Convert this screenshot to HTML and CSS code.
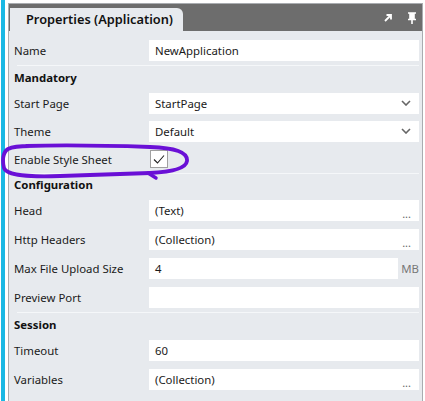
FILE: index.html
```html
<!DOCTYPE html>
<html>
<head>
<meta charset="utf-8">
<link rel="stylesheet" href="styles.css">
</head>
<body>
<div class="page">
  <div class="stripe"></div>
  <div class="window">
    <div class="titlebar">
      <div class="tab">Properties (Application)</div>
      <div class="tools">
        <svg class="ico" width="10" height="10" viewBox="0 0 10 10"><path d="M2 8 L7.5 2.5 M3.5 2 H8 V6.5" stroke="#fff" stroke-width="1.8" fill="none"/></svg>
        <svg class="ico" width="10" height="12" viewBox="0 0 10 12"><path d="M1 1 H9 M3 1 V7 M7 1 V7 M1 7.5 H9 M5 7.5 V12" stroke="#fff" stroke-width="1.6" fill="none"/><rect x="3" y="1" width="4" height="6" fill="#fff"/></svg>
      </div>
    </div>
    <div class="body">
      <div class="row first">
        <span class="label">Name</span>
        <div class="box"><span>NewApplication</span></div>
      </div>
      <div class="sep"></div>

      <div class="section compact">
        <div class="head">Mandatory</div>
        <div class="row">
          <span class="label">Start Page</span>
          <div class="box"><span>StartPage</span><svg class="chev" width="10" height="6" viewBox="0 0 10 6"><path d="M1 1 L5 5 L9 1" stroke="#666" stroke-width="1.6" fill="none"/></svg></div>
        </div>
        <div class="row">
          <span class="label">Theme</span>
          <div class="box"><span>Default</span><svg class="chev" width="10" height="6" viewBox="0 0 10 6"><path d="M1 1 L5 5 L9 1" stroke="#666" stroke-width="1.6" fill="none"/></svg></div>
        </div>
        <div class="row">
          <span class="label">Enable Style Sheet</span>
          <div class="cell"><div class="check"><svg width="16" height="16" viewBox="0 0 16 16"><path d="M3 8.5 L6.5 12 L13 4.5" stroke="#222" stroke-width="1.1" fill="none"/></svg></div></div>
        </div>
      </div>
      <div class="sep"></div>

      <div class="section">
        <div class="head short">Configuration</div>
        <div class="row">
          <span class="label">Head</span>
          <div class="box"><span>(Text)</span><span class="dots">...</span></div>
        </div>
        <div class="row">
          <span class="label">Http Headers</span>
          <div class="box"><span>(Collection)</span><span class="dots">...</span></div>
        </div>
        <div class="row">
          <span class="label">Max File Upload Size</span>
          <div class="cell unit"><div class="box"><span>4</span></div><span class="mb">MB</span></div>
        </div>
        <div class="row">
          <span class="label">Preview Port</span>
          <div class="box"></div>
        </div>
      </div>
      <div class="sep"></div>

      <div class="section">
        <div class="head">Session</div>
        <div class="row">
          <span class="label">Timeout</span>
          <div class="box"><span>60</span></div>
        </div>
        <div class="row">
          <span class="label">Variables</span>
          <div class="box"><span>(Collection)</span><span class="dots">...</span></div>
        </div>
      </div>
    </div>
  </div>
  <svg class="scribble" width="200" height="40" viewBox="0 0 200 40">
    <path d="M26 3 C60 2 120 3 150 4 C175 5 188 9 187 18 C186 26 170 29 150 30 L60 33 C30 34 7 33 4 25 C2 17 3 9 8 6 C14 3 22 3 30 3" stroke="#6a10d6" stroke-width="3.8" fill="none" stroke-linecap="round"/>
    <path d="M148 30 L156 35" stroke="#6a10d6" stroke-width="3.4" fill="none" stroke-linecap="round"/>
  </svg>
</div>
</body>
</html>
```
FILE: styles.css
```css
html, body {
  margin: 0;
  padding: 0;
  background: #ffffff;
}
body {
  font-family: "Noto Sans", "Open Sans", sans-serif;
  font-size: 11.4px;
  color: #1a1a1a;
}
.page {
  position: relative;
  display: flex;
  height: 401px;
  overflow: hidden;
}
.stripe {
  width: 4px;
  margin-left: 1px;
  background: #1ab8e4;
}
.window {
  margin-left: 3px;
  margin-top: 3px;
  width: 413px;
  border: 1px solid #a9acb0;
  border-bottom: none;
  background: #e7eaee;
}
.titlebar {
  height: 27px;
  background: #6d6d6d;
  display: flex;
  align-items: flex-end;
  justify-content: space-between;
}
.tab {
  margin-left: 1px;
  height: 23px;
  width: 173px;
  background: #e7eaee;
  border-top-right-radius: 6px;
  font-weight: 600;
  font-size: 12.8px;
  line-height: 22px;
  padding-left: 16px;
  box-sizing: border-box;
  color: #111;
}
.tools {
  display: flex;
  align-items: center;
  gap: 14px;
  height: 27px;
  padding-right: 5px;
  align-self: flex-start;
}
.body {
  padding-left: 5px;
  padding-right: 3px;
}
.row {
  display: grid;
  grid-template-columns: 135px 1fr;
  align-items: center;
  height: 29px;
}
.compact .row {
  height: 28px;
}
.row.first {
  height: 25px;
  padding-top: 9px;
  align-items: start;
}
.row.first .label {
  line-height: 21px;
}
.label {
  color: #1a1a1a;
}
.box {
  height: 21px;
  background: #ffffff;
  display: flex;
  align-items: center;
  justify-content: space-between;
  padding-left: 6px;
  padding-right: 8px;
  box-sizing: border-box;
}
.chev {
  display: block;
}
.dots {
  color: #666;
  font-size: 11px;
  align-self: flex-end;
  line-height: 15px;
}
.cell {
  display: flex;
  align-items: center;
  height: 21px;
}
.unit .box {
  flex: 1;
}
.mb {
  width: 21px;
  text-align: right;
  color: #777;
}
.check {
  width: 18px;
  height: 18px;
  margin-left: 1px;
  background: #fff;
  border: 1px solid #a0a0a0;
  box-sizing: border-box;
  display: flex;
  align-items: center;
  justify-content: center;
}
.sep {
  height: 1px;
  background: #f5f7f9;
  margin-left: 3px;
}
.head {
  height: 23px;
  line-height: 23px;
  font-weight: 700;
  color: #111;
}
.head.short {
  height: 22px;
  line-height: 21px;
}
.scribble {
  position: absolute;
  left: 0;
  top: 143px;
}
```
